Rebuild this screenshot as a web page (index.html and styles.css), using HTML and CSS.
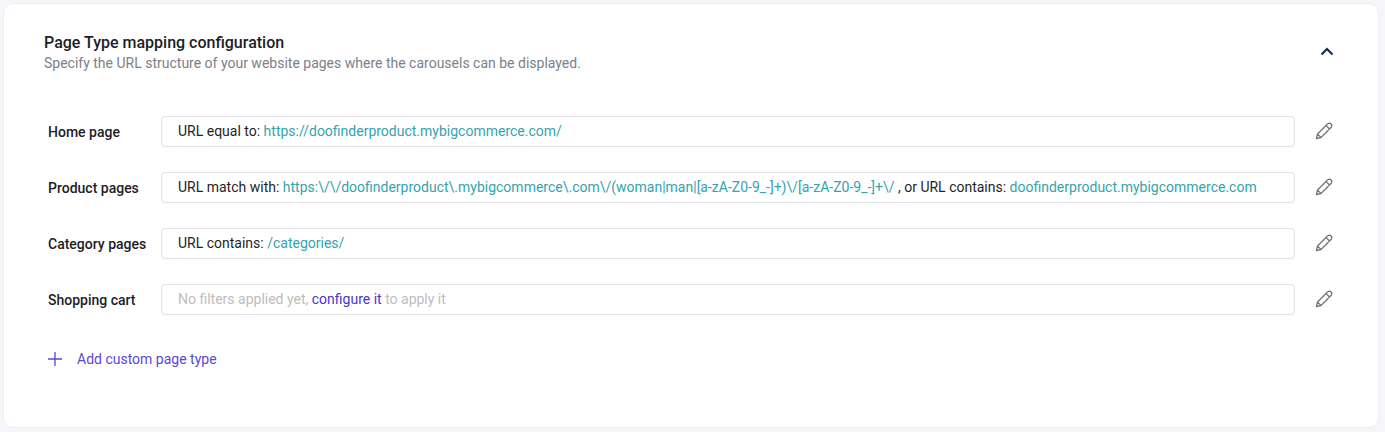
FILE: index.html
```html
<!DOCTYPE html>
<html lang="en">
<head>
  <meta charset="UTF-8">
  <title>Page Type mapping configuration</title>
  <link rel="stylesheet" href="styles.css">
</head>
<body>
  <div class="card">
    <div class="card-header">
      <div>
        <h2>Page Type mapping configuration</h2>
        <p>Specify the URL structure of your website pages where the carousels can be displayed.</p>
      </div>
      <svg class="chevron" width="14" height="9" viewBox="0 0 14 9"><path d="M1.5 7.5 7 2l5.5 5.5" fill="none" stroke="#0d2a4a" stroke-width="2"/></svg>
    </div>

    <div class="rows">
      <div class="row">
        <label>Home page</label>
        <div class="field">URL equal to: <span class="val">https://doofinderproduct.mybigcommerce.com/</span></div>
        <svg class="edit" width="18" height="18" viewBox="0 0 18 18"><path d="M1.5 16.5 2.5 12 12.5 2 14 1.2 15.5 1.5 16.7 2.8 16.8 4.2 16 5.5 6 15.5ZM2.5 12 6 15.5M11 3.5 14.5 7" fill="none" stroke="#757575" stroke-width="1.3" stroke-linejoin="round"/></svg>
      </div>
      <div class="row">
        <label>Product pages</label>
        <div class="field">URL match with: <span class="val">https:\/\/doofinderproduct\.mybigcommerce\.com\/(woman|man|[a-zA-Z0-9_-]+)\/[a-zA-Z0-9_-]+\/</span> , or URL contains: <span class="val">doofinderproduct.mybigcommerce.com</span></div>
        <svg class="edit" width="18" height="18" viewBox="0 0 18 18"><path d="M1.5 16.5 2.5 12 12.5 2 14 1.2 15.5 1.5 16.7 2.8 16.8 4.2 16 5.5 6 15.5ZM2.5 12 6 15.5M11 3.5 14.5 7" fill="none" stroke="#757575" stroke-width="1.3" stroke-linejoin="round"/></svg>
      </div>
      <div class="row">
        <label>Category pages</label>
        <div class="field">URL contains: <span class="val">/categories/</span></div>
        <svg class="edit" width="18" height="18" viewBox="0 0 18 18"><path d="M1.5 16.5 2.5 12 12.5 2 14 1.2 15.5 1.5 16.7 2.8 16.8 4.2 16 5.5 6 15.5ZM2.5 12 6 15.5M11 3.5 14.5 7" fill="none" stroke="#757575" stroke-width="1.3" stroke-linejoin="round"/></svg>
      </div>
      <div class="row">
        <label>Shopping cart</label>
        <div class="field empty">No filters applied yet, <a class="link">configure it</a> to apply it</div>
        <svg class="edit" width="18" height="18" viewBox="0 0 18 18"><path d="M1.5 16.5 2.5 12 12.5 2 14 1.2 15.5 1.5 16.7 2.8 16.8 4.2 16 5.5 6 15.5ZM2.5 12 6 15.5M11 3.5 14.5 7" fill="none" stroke="#757575" stroke-width="1.3" stroke-linejoin="round"/></svg>
      </div>
    </div>

    <div class="add-row">
      <svg width="14" height="14" viewBox="0 0 14 14"><path d="M7 0v14M0 7h14" stroke="#5b48d0" stroke-width="1.3" fill="none"/></svg>
      <span>Add custom page type</span>
    </div>
  </div>
</body>
</html>
```

FILE: styles.css
```css
body {
  margin: 0;
  padding: 3px 6px 4px 3px;
  background-color: #f5f5fa;
  font-family: Roboto, sans-serif;
  font-size: 14px;
  color: #1f1f1f;
}
.card {
  box-sizing: border-box;
  height: 425px;
  padding: 29px 45px 0 40px;
  background-color: #fff;
  border: 1px solid #eeeef3;
  border-radius: 10px;
}
.card-header {
  display: flex;
  justify-content: space-between;
  align-items: center;
}
.card-header h2 {
  margin: 0;
  font-size: 16px;
  font-weight: 500;
  line-height: 19px;
  color: #1d1d26;
}
.card-header p {
  margin: 2px 0 0;
  line-height: 19px;
  color: #7d8088;
}
.chevron {
  margin-right: -1px;
  margin-bottom: 4px;
}
.rows {
  display: flex;
  flex-direction: column;
  gap: 25px;
  margin-top: 43px;
}
.row {
  display: flex;
  align-items: center;
}
.row label {
  width: 113px;
  padding-left: 4px;
  font-weight: 500;
  color: #1d1d26;
}
.field {
  box-sizing: border-box;
  flex: 1;
  height: 31px;
  padding: 0 16px;
  line-height: 28px;
  border: 1px solid #e2e2e8;
  border-radius: 4px;
  white-space: nowrap;
}
.val {
  color: #36a3ad;
}
.empty {
  color: #bdbdbd;
}
.link {
  color: #4a36c8;
}
.edit {
  margin-left: 20px;
  margin-bottom: 2px;
}
.add-row {
  display: flex;
  align-items: center;
  gap: 15px;
  margin-top: 36px;
  padding-left: 4px;
  color: #5b48d0;
}
```
